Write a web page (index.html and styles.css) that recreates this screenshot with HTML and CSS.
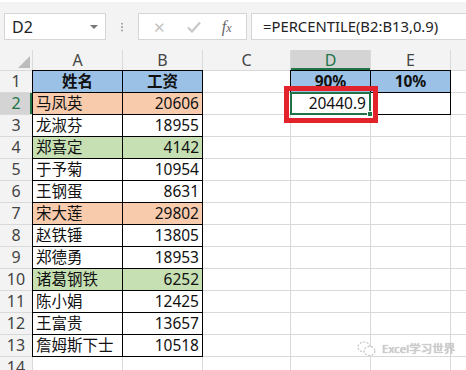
FILE: index.html
```html
<!DOCTYPE html>
<html lang="zh-CN">
<head>
  <meta charset="UTF-8" />
  <title>PERCENTILE</title>
  <link rel="stylesheet" href="styles.css">
</head>
<body>
  <div class="toolbar">
    <div class="namebox">
      <span>D2</span>
      <span class="caret"></span>
    </div>
    <div class="dots"></div>
    <div class="buttons">
      <span class="btn">&#x2715;</span>
      <span class="btn check">
        <svg width="14" height="12" viewBox="0 0 14 12"><path d="M1 6.5 L5 10.5 L13 1.5" fill="none" stroke="#c8c8c8" stroke-width="2.2"/></svg>
      </span>
      <span class="btn fx"><i>f</i><i class="x">x</i></span>
    </div>
    <div class="formula">=PERCENTILE(B2:B13,0.9)</div>
  </div>

  <div class="sheet">
    <div class="hd corner"><span class="tri"></span></div>
    <div class="hd">A</div>
    <div class="hd">B</div>
    <div class="hd">C</div>
    <div class="hd on">D</div>
    <div class="hd">E</div>
    <div class="hd"></div>

    <div class="rh">1</div>
    <div class="c b blue th">姓名</div>
    <div class="c b blue th">工资</div>
    <div class="c"></div>
    <div class="c b blue th">90%</div>
    <div class="c b blue th">10%</div>
    <div class="c"></div>

    <div class="rh on">2</div>
    <div class="c b orange">马凤英</div>
    <div class="c b orange num">20606</div>
    <div class="c"></div>
    <div class="c b num active">20440.9
      <span class="sel"><span class="handle"></span></span>
      <span class="mark"></span>
    </div>
    <div class="c b"></div>
    <div class="c"></div>

    <div class="rh">3</div>
    <div class="c b">龙淑芬</div>
    <div class="c b num">18955</div>
    <div class="c"></div><div class="c"></div><div class="c"></div><div class="c"></div>

    <div class="rh">4</div>
    <div class="c b green">郑喜定</div>
    <div class="c b green num">4142</div>
    <div class="c"></div><div class="c"></div><div class="c"></div><div class="c"></div>

    <div class="rh">5</div>
    <div class="c b">于予菊</div>
    <div class="c b num">10954</div>
    <div class="c"></div><div class="c"></div><div class="c"></div><div class="c"></div>

    <div class="rh">6</div>
    <div class="c b">王钢蛋</div>
    <div class="c b num">8631</div>
    <div class="c"></div><div class="c"></div><div class="c"></div><div class="c"></div>

    <div class="rh">7</div>
    <div class="c b orange">宋大莲</div>
    <div class="c b orange num">29802</div>
    <div class="c"></div><div class="c"></div><div class="c"></div><div class="c"></div>

    <div class="rh">8</div>
    <div class="c b">赵铁锤</div>
    <div class="c b num">13805</div>
    <div class="c"></div><div class="c"></div><div class="c"></div><div class="c"></div>

    <div class="rh">9</div>
    <div class="c b">郑德勇</div>
    <div class="c b num">18953</div>
    <div class="c"></div><div class="c"></div><div class="c"></div><div class="c"></div>

    <div class="rh">10</div>
    <div class="c b green">诸葛钢铁</div>
    <div class="c b green num">6252</div>
    <div class="c"></div><div class="c"></div><div class="c"></div><div class="c"></div>

    <div class="rh">11</div>
    <div class="c b">陈小娟</div>
    <div class="c b num">12425</div>
    <div class="c"></div><div class="c"></div><div class="c"></div><div class="c"></div>

    <div class="rh">12</div>
    <div class="c b">王富贵</div>
    <div class="c b num">13657</div>
    <div class="c"></div><div class="c"></div><div class="c"></div><div class="c"></div>

    <div class="rh">13</div>
    <div class="c b">詹姆斯下士</div>
    <div class="c b num">10518</div>
    <div class="c"></div><div class="c"></div>
    <div class="c wm-cell">
      <span class="watermark">
        <svg width="20" height="18" viewBox="0 0 20 18"><ellipse cx="7" cy="7" rx="6" ry="5" fill="none" stroke="#c4c4c4" stroke-width="1.2" stroke-dasharray="2 1.5"/><ellipse cx="12.5" cy="11" rx="5.5" ry="4.5" fill="#fff" stroke="#c4c4c4" stroke-width="1.2" stroke-dasharray="2 1.5"/></svg>
        Excel学习世界
      </span>
    </div>
    <div class="c"></div>

    <div class="rh">14</div>
    <div class="c"></div><div class="c"></div><div class="c"></div><div class="c"></div><div class="c"></div><div class="c"></div>
  </div>
</body>
</html>
```

FILE: styles.css
```css
* {
  margin: 0;
  padding: 0;
  box-sizing: border-box;
}

body {
  width: 466px;
  height: 370px;
  overflow: hidden;
  background: #fff;
  font-family: "Noto Sans", "Noto Sans CJK SC", sans-serif;
}

.toolbar {
  height: 49px;
  background: #f3f3f3;
  border-top: 2px solid #fff;
  display: flex;
  align-items: flex-start;
  padding: 11px 0 0 4px;
}

.namebox {
  width: 102px;
  height: 27px;
  background: #fff;
  border: 1px solid #d6d6d6;
  display: flex;
  align-items: center;
  justify-content: space-between;
  padding: 0 7px 0 7px;
  font-size: 16px;
  color: #222;
}

.caret {
  width: 0;
  height: 0;
  border-left: 4px solid transparent;
  border-right: 4px solid transparent;
  border-top: 4px solid #777;
}

.dots {
  width: 2px;
  height: 10px;
  margin: 9px 15px 0 15px;
  background: radial-gradient(circle, #aaa 0.9px, transparent 1.1px) 0 0 / 2px 3.4px;
}

.buttons {
  width: 109px;
  height: 27px;
  background: #fff;
  border: 1px solid #d6d6d6;
  display: flex;
  align-items: center;
  justify-content: space-around;
  padding: 0 4px;
}

.btn {
  color: #c4c4c4;
  font-size: 15px;
  display: flex;
  align-items: center;
}

.fx {
  font-family: "Liberation Serif", serif;
  color: #666;
  font-size: 16px;
}

.fx .x {
  font-size: 12px;
  margin-top: 4px;
}

.formula {
  flex: 1;
  height: 27px;
  margin-left: 4px;
  background: #fff;
  border: 1px solid #d6d6d6;
  border-right: none;
  padding-left: 11px;
  font-size: 14.8px;
  line-height: 25px;
  color: #222;
  white-space: nowrap;
}

.sheet {
  display: grid;
  grid-template-columns: 32px 89px 79px 87px 79px 79px 1fr;
  grid-template-rows: 20px;
  grid-auto-rows: 21px;
  gap: 1px;
  background: #d9d9d9;
  border-top: 1px solid #f3f3f3;
}

.hd {
  background: #f3f3f3;
  color: #444;
  font-size: 16px;
  text-align: center;
  line-height: 21px;
}

.hd.on {
  background: #d4d4d4;
  color: #217346;
  box-shadow: inset 0 -2px 0 #217346;
}

.corner {
  position: relative;
}

.tri {
  position: absolute;
  right: 2px;
  bottom: 2px;
  width: 0;
  height: 0;
  border-left: 12px solid transparent;
  border-bottom: 12px solid #bcbcbc;
}

.rh {
  background: #f3f3f3;
  color: #444;
  font-size: 16px;
  text-align: center;
  line-height: 21px;
}

.rh.on {
  background: #d4d4d4;
  color: #217346;
  box-shadow: inset -2px 0 0 #217346;
}

.c {
  background: #fff;
  font-size: 15.5px;
  line-height: 21px;
  padding: 0 3px;
  color: #111;
  white-space: nowrap;
}

.b {
  box-shadow: 0 0 0 1px #000;
}

.num {
  text-align: right;
}

.th {
  text-align: center;
  font-weight: bold;
}

.blue {
  background: #9bc2e6;
}

.orange {
  background: #f8cbad;
}

.green {
  background: #c6e0b4;
}

.active {
  position: relative;
  padding-right: 4px;
}

.sel {
  position: absolute;
  left: -1px;
  top: -1px;
  right: -1px;
  bottom: -1px;
  border: 2px solid #217346;
}

.handle {
  position: absolute;
  right: -4px;
  bottom: -4px;
  width: 6px;
  height: 6px;
  background: #217346;
  border: 1px solid #fff;
}

.mark {
  position: absolute;
  left: -7px;
  top: -7px;
  right: -8px;
  bottom: -9px;
  border: 5px solid #e3232b;
}

.wm-cell {
  position: relative;
  overflow: visible;
}

.watermark {
  position: absolute;
  left: -14px;
  top: 3px;
  display: flex;
  align-items: center;
  gap: 5px;
  font-size: 11.5px;
  color: #cfcfcf;
  text-shadow: 0 0 1px #9a9a9a;
  white-space: nowrap;
}
```
